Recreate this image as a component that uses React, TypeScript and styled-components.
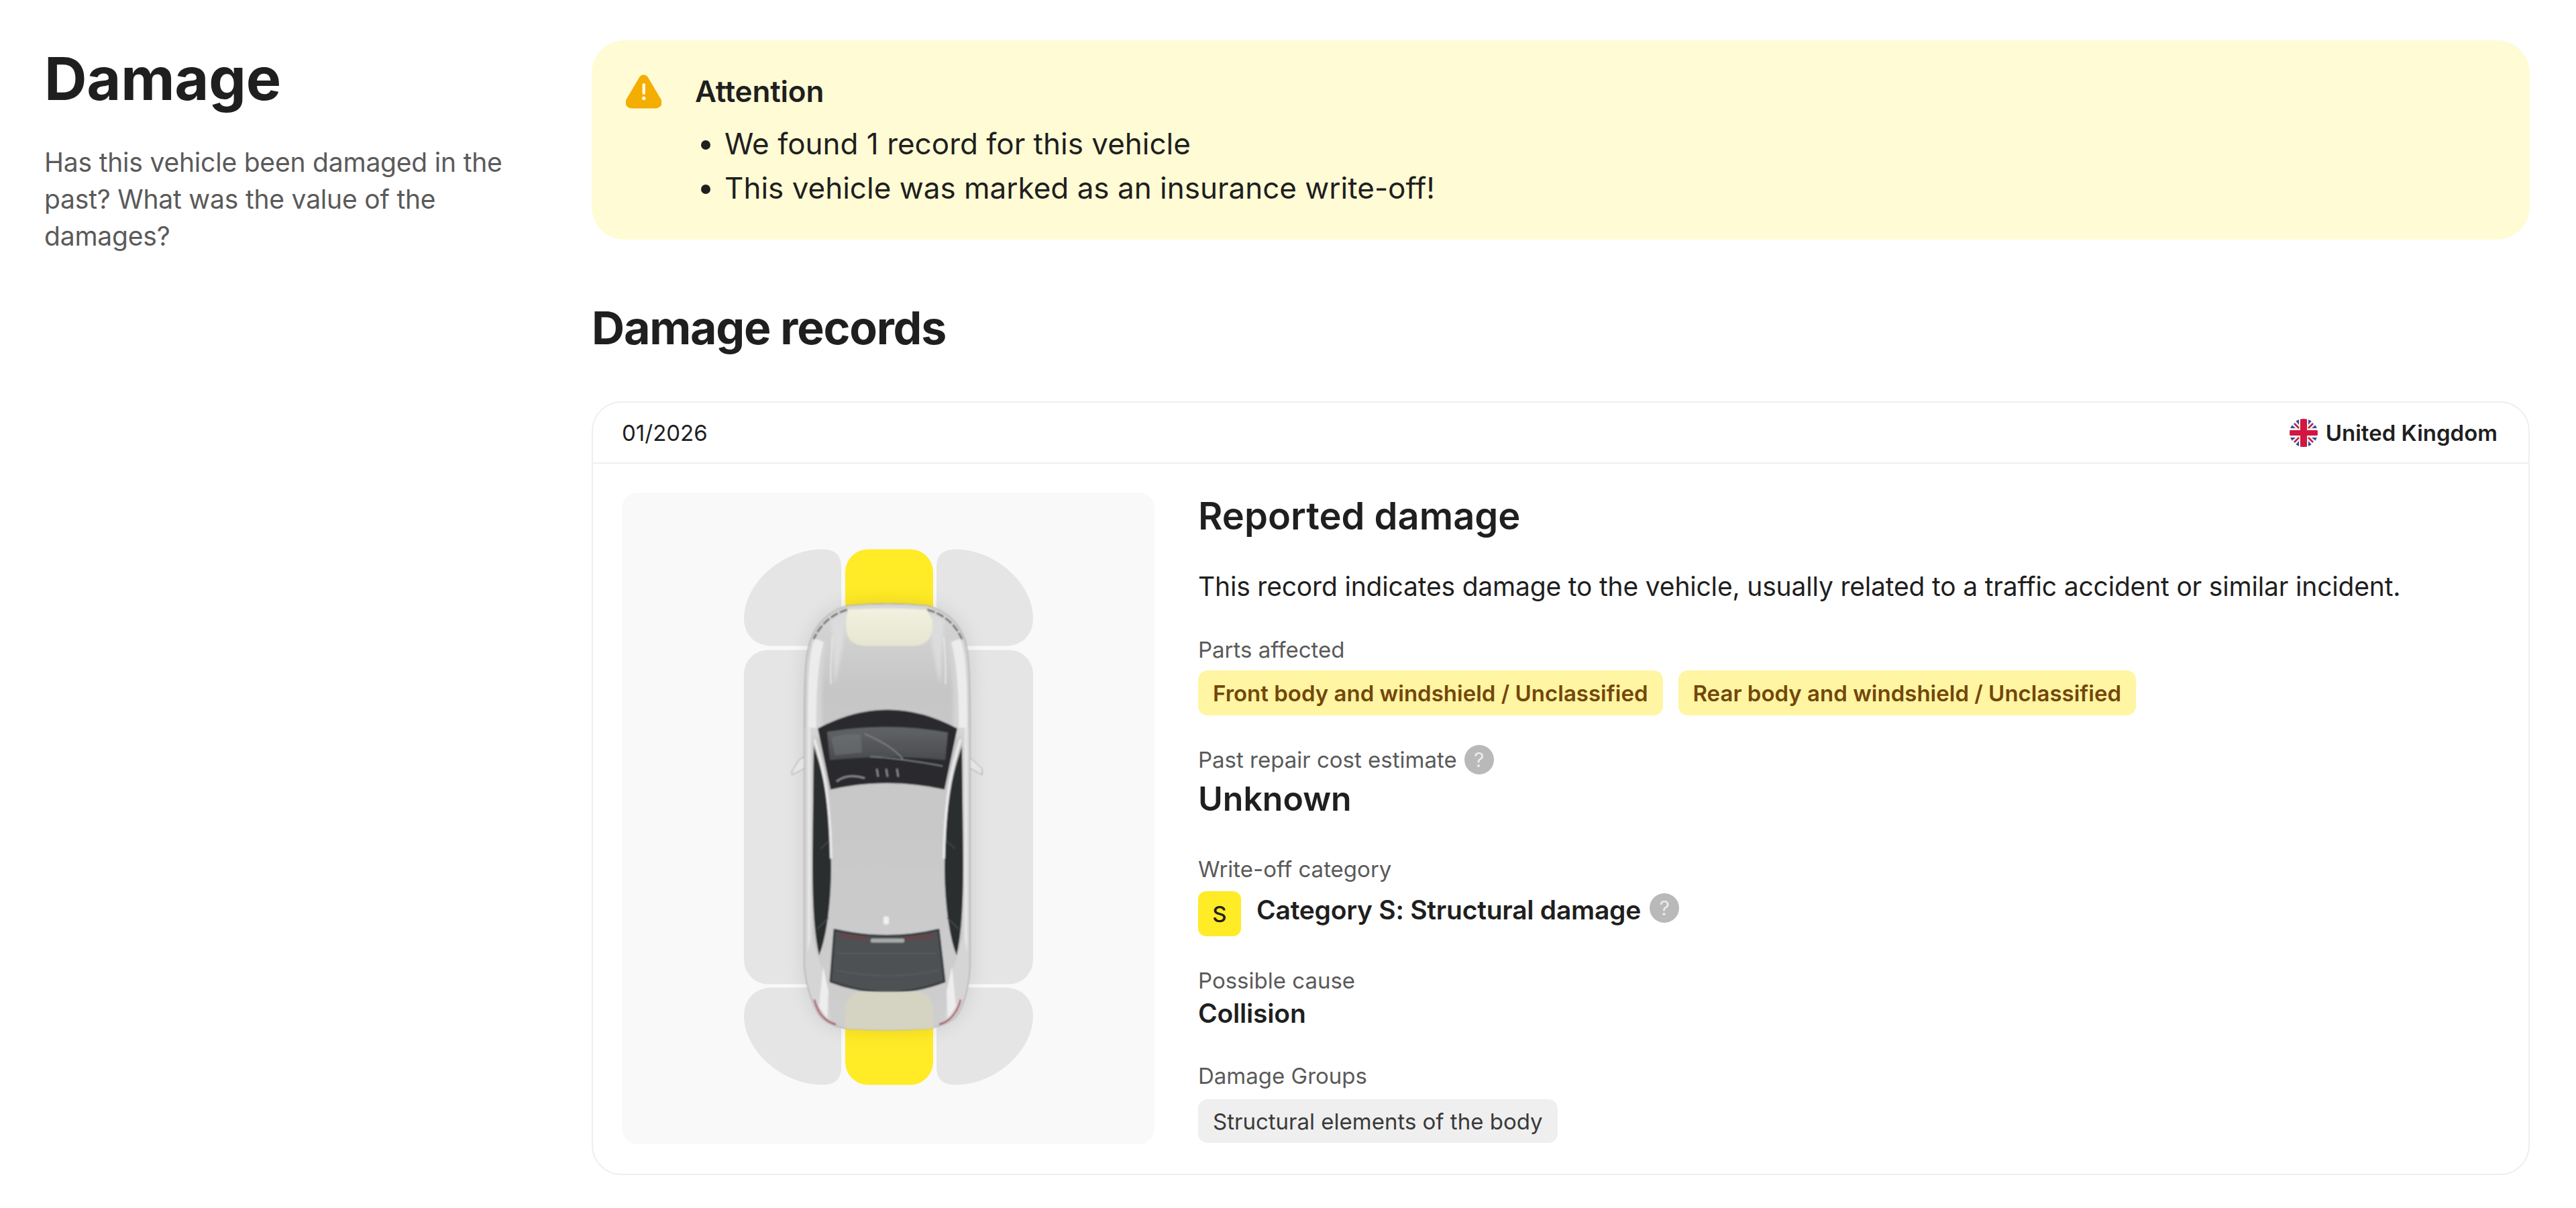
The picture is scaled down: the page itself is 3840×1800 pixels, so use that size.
import React from "react";
import styled, {createGlobalStyle} from "styled-components";

const GlobalStyle = createGlobalStyle`
  html, body {
    margin: 0;
    padding: 0;
    background: #fff;
  }
  body {
    font-family: Inter, "Noto Sans", sans-serif;
    color: #1f1f1f;
  }
`;

const Page = styled.div`
  width: 3840px;
  height: 1800px;
  display: grid;
  grid-template-columns: 816px 2889px;
  padding: 60px 69px 0 66px;
  box-sizing: border-box;
  background: #fff;
`;
const Aside = styled.aside`
  padding-right: 60px;
`;
const PageTitle = styled.h1`
  margin: 2px 0 0;
  font-size: 88px;
  line-height: 110px;
  font-weight: 700;
  letter-spacing: -0.2px;
`;
const Lead = styled.p`
  margin: 42px 0 0;
  font-size: 39px;
  line-height: 55px;
  letter-spacing: -0.2px;
  color: #5a5a5a;
`;
const Main = styled.main`
  display: flex;
  flex-direction: column;
`;
const Alert = styled.div`
  display: flex;
  gap: 50px;
  height: 297px;
  box-sizing: border-box;
  padding: 46px 51px 44px;
  background: #fffbd5;
  border-radius: 49px;
`;
const AlertTitle = styled.div`
  font-size: 44px;
  line-height: 60px;
  font-weight: 600;
  letter-spacing: -0.2px;
`;
const AlertList = styled.ul`
  margin: 15px 0 0;
  padding: 0 0 0 44px;
  font-size: 44px;
  line-height: 66px;
`;
const SectionTitle = styled.h2`
  margin: 91px 0 72px;
  font-size: 68px;
  line-height: 80px;
  font-weight: 700;
  letter-spacing: -1.2px;
`;
const Card = styled.section`
  border: 2px solid #eeeeee;
  border-radius: 44px;
  margin-top: -2px;
  height: 1153px;
  box-sizing: border-box;
`;
const CardHeader = styled.header`
  display: flex;
  align-items: center;
  justify-content: space-between;
  height: 91px;
  box-sizing: border-box;
  padding: 0 46px 0 43px;
  border-bottom: 2px solid #eeeeee;
  font-size: 33px;
`;
const Country = styled.div`
  display: flex;
  align-items: center;
  gap: 12px;
  font-weight: 600;
`;
const CardBody = styled.div`
  display: flex;
  gap: 65px;
  padding: 43px 43px;
`;
const CarPanel = styled.div`
  flex: 0 0 794px;
  height: 971px;
  display: flex;
  align-items: center;
  justify-content: center;
  background: #f9f9f9;
  border-radius: 24px;
`;
const Details = styled.div`
  display: flex;
  flex-direction: column;
  flex: 1;
  margin-top: 3px;
`;
const DetailTitle = styled.h3`
  margin: 0;
  font-size: 56px;
  line-height: 64px;
  font-weight: 600;
`;
const Description = styled.p`
  margin: 45px 0 0;
  font-size: 39px;
  line-height: 56px;
  letter-spacing: -0.18px;
`;
const FieldLabel = styled.div<{$mt: number}>`
  display: flex;
  align-items: center;
  gap: 11px;
  margin-top: ${p => p.$mt}px;
  font-size: 33px;
  line-height: 44px;
  color: #5a5a5a;
`;
const Chips = styled.div`
  display: flex;
  gap: 23px;
  margin-top: 9px;
`;
const Chip = styled.span<{$tone?: "yellow" | "grey"}>`
  display: inline-flex;
  align-items: center;
  height: ${p => p.$tone === "grey" ? 65 : 67}px;
  padding: 0 22px;
  border-radius: 14px;
  font-size: 33px;
  font-weight: ${p => p.$tone === "grey" ? 400 : 600};
  background: ${p => p.$tone === "grey" ? "#efefef" : "#fff5a3"};
  color: ${p => p.$tone === "grey" ? "#3a3a3a" : "#74470a"};
`;
const BigValue = styled.div`
  margin-top: 5px;
  font-size: 50px;
  line-height: 62px;
  font-weight: 600;
`;
const CategoryRow = styled.div`
  display: flex;
  align-items: flex-start;
  margin-top: 11px;
`;
const CategoryBadge = styled.span`
  display: flex;
  align-items: center;
  justify-content: center;
  width: 64px;
  height: 67px;
  margin-right: 23px;
  border-radius: 12px;
  background: #ffeb26;
  font-size: 33px;
  font-weight: 500;
`;
const CategoryName = styled.span`
  font-size: 39px;
  line-height: 56px;
  font-weight: 600;
  letter-spacing: -0.25px;
  margin-right: 13px;
`;
const HelpDot = styled.span<{$raised?: boolean}>`
  display: inline-flex;
  align-items: center;
  justify-content: center;
  width: 44px;
  height: 44px;
  border-radius: 50%;
  background: #b9b9b9;
  color: #ececec;
  font-size: 30px;
  font-weight: 400;
  margin-top: ${p => p.$raised ? 3 : 0}px;
`;
const Value = styled.div`
  margin-top: 2px;
  font-size: 39px;
  line-height: 50px;
  font-weight: 600;
  letter-spacing: -0.2px;
`;
const GroupChips = styled.div`
  margin-top: 13px;
`;

const WarningIcon = () => (
  <svg width="53" height="51" viewBox="0 0 53 51" style={{flex: "none", marginTop: 5}}>
    <path d="M26.500 8 L7 41 Q6.500 43 9 43 L44 43 Q46.500 43 46 41 Z" fill="#f3ae00" stroke="#f3ae00" strokeWidth="15" strokeLinejoin="round"/>
    <rect x="24.500" y="13" width="4.500" height="17" rx="2.250" fill="#fff8e0"/>
    <circle cx="26.700" cy="35.500" r="2.700" fill="#fff8e0"/>
  </svg>
);

const UkFlag = () => (
  <svg width="42" height="42" viewBox="0 0 42 42">
    <defs>
      <clipPath id="ukc"><circle cx="21" cy="21" r="21"/></clipPath>
    </defs>
    <g clipPath="url(#ukc)">
      <rect width="42" height="42" fill="#f6f6f6"/>
      <path d="M14 1 V9 L9 3 Z M28 1 V9 L33 3 Z M1 14 H9 L3 9 Z M41 14 H33 L39 9 Z M1 28 H9 L3 33 Z M41 28 H33 L39 33 Z M14 41 V33 L9 39 Z M28 41 V33 L33 39 Z" fill="#2a4f9b"/>
      <path d="M7 7 L14 14 M35 7 L28 14 M7 35 L14 28 M35 35 L28 28" stroke="#d3163f" strokeWidth="2.500"/>
      <rect x="16" width="10" height="42" fill="#d3163f"/>
      <rect y="17" width="42" height="8" fill="#d3163f"/>
    </g>
  </svg>
);

const bodyPath = "M1263 903 Q1322 897 1381 903 C1410 910 1430 930 1438 955 C1443 975 1445 1000 1445 1080 L1445 1437 C1444 1470 1436 1495 1428 1510 C1420 1525 1395 1531 1380 1533 Q1322 1537 1262 1533 C1245 1531 1228 1525 1218 1510 C1210 1495 1200 1470 1198 1437 L1198 1080 C1198 1000 1200 975 1207 955 C1215 930 1235 910 1263 903 Z";

const CarDiagram = () => (
  <svg width="450" height="820" viewBox="1098 810.500 450 820">
    <defs>
      <linearGradient id="hood" x1="0" y1="0" x2="0" y2="1">
        <stop offset="0" stopColor="#d8d8d8"/>
        <stop offset="0.2" stopColor="#c6c6c6"/>
        <stop offset="0.7" stopColor="#cacaca"/>
        <stop offset="1" stopColor="#cfcfcf"/>
      </linearGradient>
      <linearGradient id="glass" x1="0" y1="0" x2="0" y2="1">
        <stop offset="0" stopColor="#626466"/>
        <stop offset="1" stopColor="#4a4c4e"/>
      </linearGradient>
      <linearGradient id="frontTint" x1="0" y1="0" x2="0" y2="1">
        <stop offset="0" stopColor="#f3f2e0"/>
        <stop offset="1" stopColor="#e6e5d1"/>
      </linearGradient>
      <filter id="carShadow" x="-20%" y="-10%" width="140%" height="120%">
        <feGaussianBlur stdDeviation="16"/>
      </filter>
      <filter id="soft" x="-5%" y="-5%" width="110%" height="110%">
        <feGaussianBlur stdDeviation="0.800"/>
      </filter>
      <filter id="softer" x="-30%" y="-10%" width="160%" height="120%">
        <feGaussianBlur stdDeviation="2"/>
      </filter>
      <clipPath id="carBody"><path d={bodyPath}/></clipPath>
    </defs>

    {/* zones */}
    <g fill="#e5e5e5">
      <path d="M1253 963 V845 Q1253 819 1225 819 C1165 819 1108 870 1108 922 C1108 947 1125 963 1150 963 Z"/>
      <path d="M1395 963 V845 Q1395 819 1423 819 C1483 819 1539 870 1539 922 C1539 947 1522 963 1497 963 Z"/>
      <rect x="1108" y="969" width="431" height="498" rx="36"/>
      <path d="M1253 1472 V1591 Q1253 1617 1225 1617 C1165 1617 1108 1566 1108 1514 C1108 1489 1125 1472 1150 1472 Z"/>
      <path d="M1395 1472 V1591 Q1395 1617 1423 1617 C1483 1617 1539 1566 1539 1514 C1539 1489 1522 1472 1497 1472 Z"/>
    </g>
    <rect x="1259" y="819" width="131" height="144" rx="34" fill="#ffeb26"/>
    <rect x="1259" y="1472" width="131" height="145" rx="34" fill="#ffeb26"/>

    {/* car */}
    <path d={bodyPath} fill="#000" opacity="0.1" filter="url(#carShadow)"/>
    <g filter="url(#soft)">
      <path d="M1207 1122 L1208 1140 L1180 1155 L1179 1151 L1190 1133 Z" fill="#e6e6e6" stroke="#9a9a9a" strokeWidth="1"/>
      <path d="M1437 1122 L1436 1140 L1463 1155 L1463 1146 Z" fill="#e6e6e6" stroke="#9a9a9a" strokeWidth="1"/>
      <path d={bodyPath} fill="url(#hood)"/>
      <g clipPath="url(#carBody)">
        {/* fender and sill highlights */}
        <path d="M1232 958 C1224 1000 1222 1050 1226 1100 L1199 1100 L1199 985 L1210 950 Z" fill="#d4d4d4" filter="url(#softer)"/>
        <path d="M1412 958 C1420 1000 1422 1050 1418 1100 L1445 1100 L1445 985 L1434 950 Z" fill="#d4d4d4" filter="url(#softer)"/>
        <path d="M1203 1085 L1216 1085 C1215 1040 1218 990 1227 957 L1213 952 C1206 975 1203 1000 1203 1085 Z" fill="#ececec"/>
        <path d="M1441 1085 L1428 1085 C1429 1040 1426 990 1417 957 L1431 952 C1438 975 1441 1000 1441 1085 Z" fill="#ececec"/>
        <path d="M1238 925 L1262 912 L1255 965 L1244 1020 Z M1406 925 L1382 912 L1389 965 L1400 1020 Z" fill="#dcdcdc" filter="url(#softer)"/>
        <path d="M1198 1085 H1210 L1210 1400 L1232 1470 L1238 1533 L1198 1500 Z" fill="#d5d5d5"/>
        <path d="M1445 1085 H1434 L1434 1400 L1412 1470 L1406 1533 L1445 1500 Z" fill="#d5d5d5"/>
        <path d="M1203 1085 H1207 V1400 L1203 1420 Z M1441 1085 H1437 V1400 L1441 1420 Z" fill="#e6e6e6"/>
        <path d="M1226 1440 L1234 1478 L1232 1518 L1220 1500 Z M1418 1440 L1410 1478 L1412 1518 L1424 1500 Z" fill="#eeeeee"/>
        <path d="M1240 950 Q1236 1000 1238 1020 M1406 950 Q1410 1000 1408 1020" fill="none" stroke="#e6e6e6" strokeWidth="2"/>
        {/* front corner trim */}
        <path d="M1262 909 C1240 915 1222 930 1212 953 M1381 909 C1405 915 1423 930 1433 953" fill="none" stroke="#707070" strokeWidth="3" strokeDasharray="12 3"/>
        <path d="M1266 901 Q1322 897 1378 901" fill="none" stroke="#3a3a2c" strokeWidth="3"/>
        {/* tail lights */}
        <path d="M1213 1490 C1218 1510 1228 1522 1245 1527 M1431 1490 C1426 1510 1416 1522 1399 1527" fill="none" stroke="#a8434f" strokeWidth="2.500"/>
      </g>
      <path d={bodyPath} fill="none" stroke="#b0b0b0" strokeWidth="1.500"/>

      {/* side windows */}
      <path d="M1212 1112 C1225 1150 1236 1190 1238 1290 C1238 1340 1232 1395 1220 1424 C1212 1390 1210 1340 1210 1280 Z" fill="#2c2e2f"/>
      <path d="M1433 1112 C1420 1150 1409 1190 1407 1290 C1407 1340 1413 1395 1425 1424 C1433 1390 1435 1340 1435 1280 Z" fill="#2c2e2f"/>
      <path d="M1222 1265 L1236 1253 M1423 1265 L1409 1253 M1217 1385 L1234 1368 M1428 1385 L1411 1368" stroke="#4a4c4d" strokeWidth="1.500"/>

      {/* windshield */}
      <path d="M1218 1086 Q1322 1030 1426 1086 L1407 1177 Q1322 1158 1237 1177 Z" fill="#2a2b2d"/>
      <path d="M1232 1091 Q1322 1076 1412 1092 L1408 1133 Q1322 1124 1236 1133 Z" fill="url(#glass)"/>
      <path d="M1238 1100 Q1250 1094 1282 1094 L1284 1122 L1244 1126 Z" fill="#737578" opacity="0.55"/>
      <path d="M1288 1094 Q1330 1112 1345 1132 M1296 1128 Q1340 1130 1404 1142" stroke="#85878a" strokeWidth="1.500" fill="none"/>
      <path d="M1246 1165 Q1262 1152 1288 1160 M1306 1146 L1308 1158 M1320 1146 L1322 1158 M1336 1146 L1338 1158" stroke="#8c8c8c" strokeWidth="2.500" fill="none"/>
      <path d="M1213 1102 C1225 1140 1236 1180 1238 1280 M1431 1102 C1419 1140 1408 1180 1406 1280" stroke="#ececec" strokeWidth="3.500" fill="none"/>

      {/* rear window */}
      <path d="M1243 1386 Q1322 1404 1398 1386 L1407 1463 Q1322 1495 1237 1463 Z" fill="#4d5153" stroke="#34383a" strokeWidth="3" strokeLinejoin="round"/>
      <path d="M1252 1394 Q1275 1398 1293 1399 M1350 1399 Q1372 1398 1392 1394" stroke="#6e3f46" strokeWidth="4" fill="none"/>
      <rect x="1297" y="1399" width="50" height="6" rx="2" fill="#a9aaab"/>
      <path d="M1247 1421 H1395 M1245 1446 Q1322 1463 1399 1446" stroke="#616568" strokeWidth="1" fill="none"/>
      <rect x="1316" y="1366" width="8" height="12" rx="2" fill="#f0f0f0"/>
    </g>

    {/* damage tint over the body */}
    <g filter="url(#soft)">
      <path d="M1263 909 Q1322 905 1380 909 L1389 925 V933 Q1389 963 1359 963 H1290 Q1260 963 1260 933 V925 Z" fill="url(#frontTint)"/>
      <path d="M1289 1478 H1360 Q1389 1478 1390 1508 V1533 Q1322 1537 1259 1533 V1508 Q1260 1478 1289 1478 Z" fill="#d5d4c2"/>
    </g>
  </svg>
);

export default function App() {
  return <>
    <GlobalStyle/>
    <Page>
      <Aside>
        <PageTitle>Damage</PageTitle>
        <Lead>Has this vehicle been damaged in the past? What was the value of the damages?</Lead>
      </Aside>
      <Main>
        <Alert>
          <WarningIcon/>
          <div>
            <AlertTitle>Attention</AlertTitle>
            <AlertList>
              <li>We found 1 record for this vehicle</li>
              <li>This vehicle was marked as an insurance write-off!</li>
            </AlertList>
          </div>
        </Alert>
        <SectionTitle>Damage records</SectionTitle>
        <Card>
          <CardHeader>
            <span>01/2026</span>
            <Country><UkFlag/>United Kingdom</Country>
          </CardHeader>
          <CardBody>
            <CarPanel><CarDiagram/></CarPanel>
            <Details>
              <DetailTitle>Reported damage</DetailTitle>
              <Description>This record indicates damage to the vehicle, usually related to a traffic accident or similar incident.</Description>
              <FieldLabel $mt={44}>Parts affected</FieldLabel>
              <Chips>
                <Chip>Front body and windshield / Unclassified</Chip>
                <Chip>Rear body and windshield / Unclassified</Chip>
              </Chips>
              <FieldLabel $mt={44}>Past repair cost estimate <HelpDot>?</HelpDot></FieldLabel>
              <BigValue>Unknown</BigValue>
              <FieldLabel $mt={52}>Write-off category</FieldLabel>
              <CategoryRow>
                <CategoryBadge>S</CategoryBadge>
                <CategoryName>Category S: Structural damage</CategoryName>
                <HelpDot $raised>?</HelpDot>
              </CategoryRow>
              <FieldLabel $mt={44}>Possible cause</FieldLabel>
              <Value>Collision</Value>
              <FieldLabel $mt={46}>Damage Groups</FieldLabel>
              <GroupChips><Chip $tone="grey">Structural elements of the body</Chip></GroupChips>
            </Details>
          </CardBody>
        </Card>
      </Main>
    </Page>
  </>;
}
